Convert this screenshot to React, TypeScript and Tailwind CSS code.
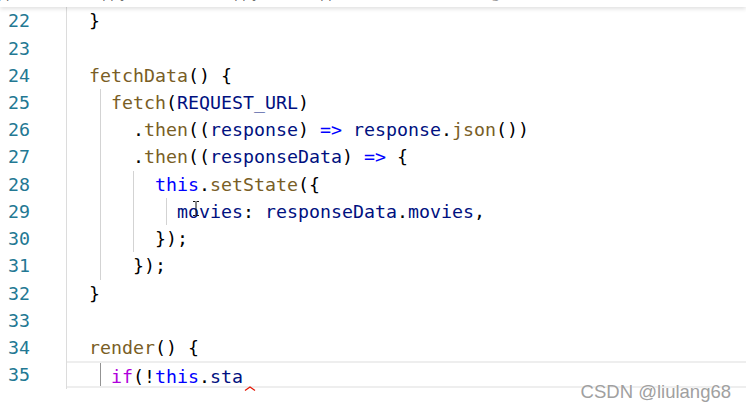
import React from "react";

// VS Code Light+ token colours
const FN = "#795E26";
const VAR = "#001080";
const KW = "#0000FF";
const CTRL = "#AF00DB";
const P = "#000000";

type Tok = [string, string];

const LINE_H = "h-[27.23px] leading-[27.23px]";

// guides: x offset inside the code column
const lines: { n: number; toks: Tok[]; guides?: number[]; active?: boolean }[] = [
  { n: 22, toks: [["  }", P]] },
  { n: 23, toks: [] },
  { n: 24, toks: [["  ", P], ["fetchData", FN], ["() {", P]] },
  { n: 25, toks: [["    ", P], ["fetch", FN], ["(", P], ["REQUEST_URL", VAR], [")", P]], guides: [33] },
  {
    n: 26,
    toks: [
      ["      .", P], ["then", FN], ["((", P], ["response", VAR], [")", P], [" => ", KW],
      ["response", VAR], [".", P], ["json", FN], ["())", P],
    ],
    guides: [33],
  },
  {
    n: 27,
    toks: [["      .", P], ["then", FN], ["((", P], ["responseData", VAR], [")", P], [" => ", KW], ["{", P]],
    guides: [33],
  },
  { n: 28, toks: [["        ", P], ["this", KW], [".", P], ["setState", FN], ["({", P]], guides: [33, 66] },
  {
    n: 29,
    toks: [["          ", P], ["movies", VAR], [": ", P], ["responseData", VAR], [".", P], ["movies", VAR], [",", P]],
    guides: [33, 66, 99],
  },
  { n: 30, toks: [["        });", P]], guides: [33, 66] },
  { n: 31, toks: [["      });", P]], guides: [33] },
  { n: 32, toks: [["  }", P]] },
  { n: 33, toks: [] },
  { n: 34, toks: [["  ", P], ["render", FN], ["() {", P]] },
  {
    n: 35,
    toks: [["    ", P], ["if", CTRL], ["(!", P], ["this", KW], [".", P], ["sta", VAR]],
    guides: [33],
    active: true,
  },
];

// Breadcrumb strip scrolled almost out of view: only descenders / icon bottoms show.
const Breadcrumb: React.FC = () => (
  <div className="absolute inset-x-0 top-0 z-10 h-[7px] overflow-hidden bg-white shadow-[0_2px_4px_rgba(0,0,0,0.12)]">
    <div className="-mt-[16px] flex h-[20px] items-center whitespace-pre text-[13px] text-[#616161] [font-family:'Open_Sans',sans-serif]">
      <span className="-ml-[2px] w-[97px]">pp</span>
      <span className="w-[116px]">app.js  ›</span>
      <span className="h-[11px] w-[11px] rounded-full bg-[#d67e2c]" />
      <span className="w-[75px] pl-1">App.js</span>
      <span className="h-[11px] w-[11px] rounded-full bg-[#652d90]" />
      <span className="w-[123px] pl-1">App</span>
      <span className="h-[11px] w-[11px] rounded-full bg-[#652d90]" />
      <span className="w-[50px] pl-1">Data</span>
      <span className="text-[#9a9a9a]">g</span>
    </div>
  </div>
);

export default function App() {
  return (
    <div className="relative h-[409px] w-[746px] overflow-hidden bg-white">
      <Breadcrumb />

      <div className="flex h-[389px] pt-[7.4px] text-[18.27px] [font-family:'DejaVu_Sans_Mono',monospace]">
        {/* gutter */}
        <div className="-mt-[7.4px] w-[67px] shrink-0 border-r border-[#dcdcdc] pt-[7.4px]">
          {lines.map((l) => (
            <div key={l.n} className={`${LINE_H} w-[30px] text-right text-[#237893]`}>
              {l.n}
            </div>
          ))}
        </div>

        {/* code */}
        <div className="flex-1">
          {lines.map((l) => (
            <div
              key={l.n}
              className={`relative box-border whitespace-pre ${LINE_H} ${
                l.active ? "border-y-2 border-[#eeeeee] leading-[23.23px]" : ""
              }`}
            >
              {l.guides?.map((g) => (
                <span
                  key={g}
                  className={`absolute top-0 bottom-0 w-px ${l.active ? "bg-[#939393]" : "bg-[#d3d3d3]"}`}
                  style={{ left: g }}
                />
              ))}
              {l.toks.map(([t, c], i) => (
                <span key={i} style={{ color: c }}>
                  {t}
                </span>
              ))}
              {l.active && (
                <svg className="absolute left-[177px] top-[23px]" width="12" height="5" viewBox="0 0 12 5">
                  <path d="M1 4.5 L6 1 L11 4.5" fill="none" stroke="#e51400" strokeWidth="1.2" />
                </svg>
              )}
            </div>
          ))}
        </div>
      </div>

      {/* mouse I-beam */}
      <svg className="absolute left-[192px] top-[201px]" width="8" height="15" viewBox="0 0 8 15">
        <path d="M1 0.5 H3.5 M4.5 0.5 H7 M4 1 V14 M1 14.5 H3.5 M4.5 14.5 H7" stroke="#111" strokeWidth="1" fill="none" />
      </svg>

      {/* watermark */}
      <div className="absolute right-[15px] top-[378px] text-[18.5px] text-[#a0a0a0] [font-family:'Liberation_Sans',sans-serif] [text-shadow:0_0_2px_#fff,0_0_1px_#fff]">
        CSDN @liulang68
      </div>
    </div>
  );
}
